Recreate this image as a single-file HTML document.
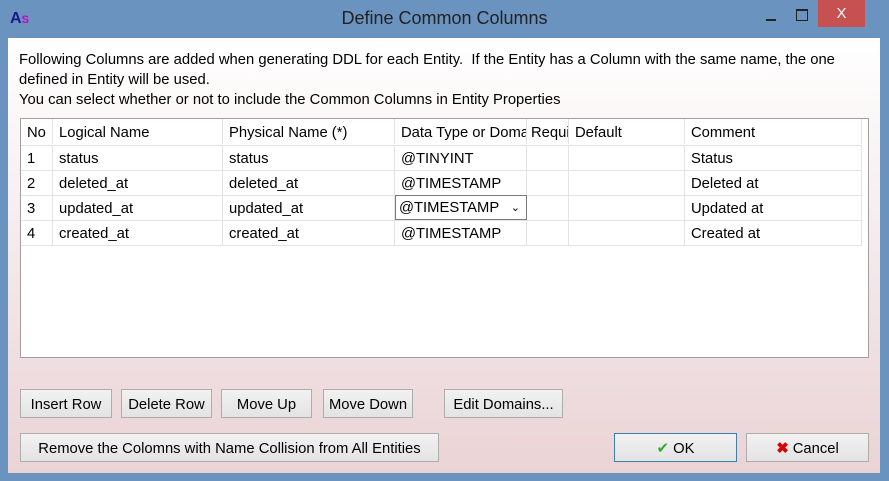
<html><head><style>
body{margin:0;width:889px;height:481px;background:#6b93bf;font-family:"Liberation Sans",sans-serif;font-size:14.8px;color:#000;position:relative;overflow:hidden}
.t{position:absolute;top:8px;left:0;width:889px;text-align:center;font-size:18px;color:#222}
.cl{position:absolute;left:8px;top:38px;width:872px;height:435px;background:linear-gradient(#ffffff,#ead3d5)}
.a{position:absolute;white-space:nowrap}
.tb{position:absolute;left:12px;top:80px;width:849px;height:240px;background:#fff;border:1px solid #a0a0a0;box-sizing:border-box}
.r{position:absolute;left:0;height:25px;width:841px;border-bottom:1px solid #e3e3e3}
.c{position:absolute;top:0;height:25px;line-height:28px;padding-left:6px;border-right:1px solid #e3e3e3;box-sizing:border-box;overflow:hidden;white-space:nowrap}
.b{position:absolute;height:29px;background:linear-gradient(#f2f2f2,#e3e3e3);border:1px solid #adadad;box-sizing:border-box;text-align:center;line-height:30px;white-space:nowrap}
</style></head><body>
<div class="a" style="left:10px;top:10px;font-weight:bold;color:#1a1a8a;font-size:16px">A<span style="color:#c0c;font-size:11px">S</span></div>
<div class="t">Define Common Columns</div>
<div class="a" style="left:766px;top:19px;width:10px;height:2px;background:#222"></div>
<div class="a" style="left:796px;top:9px;width:10px;height:9px;border:1px solid #222;border-top-width:2px"></div>
<div class="a" style="left:818px;top:0;width:47px;height:27px;background:#c75050;color:#fff;text-align:center;line-height:27px;font-size:15px">X</div>
<div class="cl">
<div class="a" style="left:11px;top:12px;line-height:20px">Following Columns are added when generating DDL for each Entity.&nbsp; If the Entity has a Column with the same name, the one<br>defined in Entity will be used.<br>You can select whether or not to include the Common Columns in Entity Properties</div>
<div class="tb">
<div class="r" style="top:0;height:26px"><div class="c" style="left:0;width:32px;line-height:29px">No</div><div class="c" style="left:32px;width:170px;line-height:29px">Logical Name</div><div class="c" style="left:202px;width:172px;line-height:29px">Physical Name (*)</div><div class="c" style="left:374px;width:132px;line-height:29px">Data Type or Domain</div><div class="c" style="left:506px;width:42px;padding-left:4px;line-height:29px">Required</div><div class="c" style="left:548px;width:116px;line-height:29px">Default</div><div class="c" style="left:664px;width:177px;line-height:29px">Comment</div></div>
<div class="r" style="top:26px"><div class="c" style="left:0;width:32px">1</div><div class="c" style="left:32px;width:170px">status</div><div class="c" style="left:202px;width:172px">status</div><div class="c" style="left:374px;width:132px">@TINYINT</div><div class="c" style="left:506px;width:42px"></div><div class="c" style="left:548px;width:116px"></div><div class="c" style="left:664px;width:177px">Status</div></div>
<div class="r" style="top:51px"><div class="c" style="left:0;width:32px">2</div><div class="c" style="left:32px;width:170px">deleted_at</div><div class="c" style="left:202px;width:172px">deleted_at</div><div class="c" style="left:374px;width:132px">@TIMESTAMP</div><div class="c" style="left:506px;width:42px"></div><div class="c" style="left:548px;width:116px"></div><div class="c" style="left:664px;width:177px">Deleted at</div></div>
<div class="r" style="top:76px"><div class="c" style="left:0;width:32px">3</div><div class="c" style="left:32px;width:170px">updated_at</div><div class="c" style="left:202px;width:172px">updated_at</div><div class="c" style="left:374px;width:132px;border:1px solid #7a7a7a;padding-left:3px;line-height:25px">@TIMESTAMP<span style="position:absolute;right:6px;font-size:11px">&#8964;</span></div><div class="c" style="left:506px;width:42px"></div><div class="c" style="left:548px;width:116px"></div><div class="c" style="left:664px;width:177px">Updated at</div></div>
<div class="r" style="top:101px"><div class="c" style="left:0;width:32px">4</div><div class="c" style="left:32px;width:170px">created_at</div><div class="c" style="left:202px;width:172px">created_at</div><div class="c" style="left:374px;width:132px">@TIMESTAMP</div><div class="c" style="left:506px;width:42px"></div><div class="c" style="left:548px;width:116px"></div><div class="c" style="left:664px;width:177px">Created at</div></div>
</div>
<div class="b" style="left:12px;top:351px;width:92px">Insert Row</div>
<div class="b" style="left:113px;top:351px;width:91px">Delete Row</div>
<div class="b" style="left:213px;top:351px;width:91px">Move Up</div>
<div class="b" style="left:315px;top:351px;width:90px">Move Down</div>
<div class="b" style="left:436px;top:351px;width:119px">Edit Domains...</div>
<div class="b" style="left:12px;top:395px;width:419px">Remove the Colomns with Name Collision from All Entities</div>
<div class="b" style="left:606px;top:395px;width:123px;border-color:#3c7fb1"><span style="color:#3a3">&#10004;</span> OK</div>
<div class="b" style="left:738px;top:395px;width:123px"><span style="color:#d00;font-weight:bold">&#10006;</span> Cancel</div>
</div>
</body></html>
